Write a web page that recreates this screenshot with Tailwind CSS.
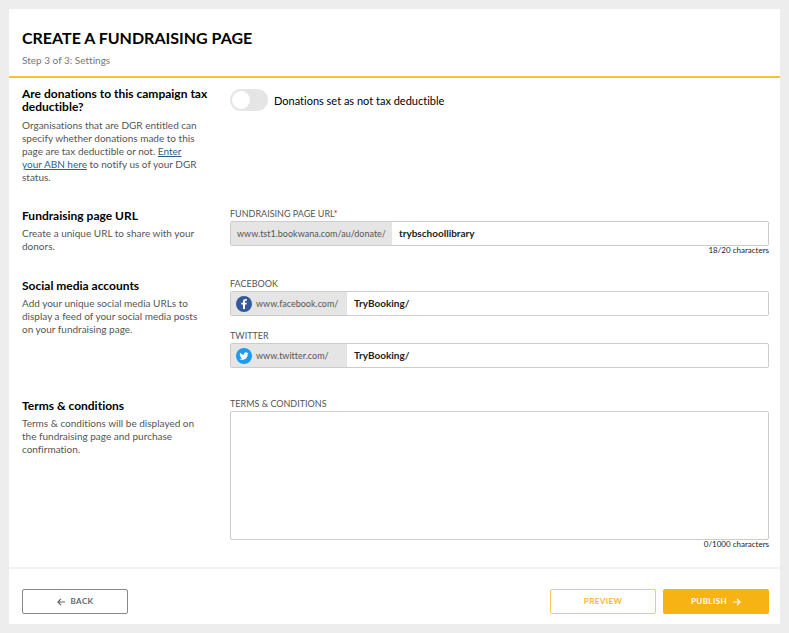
<!DOCTYPE html>
<html lang="en">
<head>
    <meta charset="UTF-8">
    <meta name="viewport" content="width=device-width, initial-scale=1.0">
    <title>Create a fundraising page</title>
    <script src="https://cdn.jsdelivr.net/npm/@tailwindcss/browser@4"></script>
</head>
<body class="bg-[#ededed] p-[9px] font-['Lato','Liberation_Sans',sans-serif] text-[10px] leading-[13px] text-[#555] [font-variant-ligatures:none]">
    <div class="bg-white">
        <header class="border-b-2 border-[#fcc12c] px-[13px] pt-4 pb-[7px]">
            <h1 class="text-[16px] leading-[26px] font-bold text-black">CREATE A FUNDRAISING PAGE</h1>
            <p class="leading-[18px] text-[#777]">Step 3 of 3: Settings</p>
        </header>

        <form>
            <!-- Tax deductible -->
            <section class="grid grid-cols-[188px_1fr] gap-x-5 pl-[13px] pr-[11px] pt-[9px] pb-[25px]">
                <div>
                    <h2 class="text-[12px] font-bold text-black">Are donations to this campaign tax deductible?</h2>
                    <p class="mt-[6px] max-w-[180px]">Organisations that are DGR entitled can specify whether donations made to this page are tax deductible or not. <a href="#" class="text-[#2d5f8f] underline">Enter your ABN here</a> to notify us of your DGR status.</p>
                </div>
                <label class="flex items-center self-start pt-[2px] text-[11px] text-black">
                    <input type="checkbox" class="mr-[6px] h-[22px] w-[38px] appearance-none rounded-full bg-[#e5e5e5] p-[2px] before:block before:size-[18px] before:rounded-full before:bg-white checked:bg-[#f7b314] checked:before:ml-4">
                    Donations set as not tax deductible
                </label>
            </section>

            <!-- Page URL -->
            <section class="grid grid-cols-[188px_1fr] gap-x-5 pl-[13px] pr-[11px] pb-[25px]">
                <div>
                    <h2 class="text-[12px] font-bold text-black">Fundraising page URL</h2>
                    <p class="mt-[5px]">Create a unique URL to share with your donors.</p>
                </div>
                <div>
                    <label for="page_url" class="block text-[9px] leading-[10px]">FUNDRAISING PAGE URL<span class="text-red-600">*</span></label>
                    <div class="mt-[2px] flex h-[25px] rounded-[2px] border border-[#ccc]">
                        <span class="flex items-center bg-[#e5e5e5] px-[6px] text-[9px]">www.tst1.bookwana.com/au/donate/</span>
                        <input type="text" id="page_url" value="trybschoollibrary" class="min-w-0 flex-1 px-[7px] text-[10px] font-bold text-[#222] outline-none">
                    </div>
                    <p class="text-right text-[8px] leading-[8px] text-[#222]">18/20 characters</p>
                </div>
            </section>

            <!-- Social media -->
            <section class="grid grid-cols-[188px_1fr] gap-x-5 pl-[13px] pr-[11px] pb-[31px]">
                <div>
                    <h2 class="text-[12px] font-bold text-black">Social media accounts</h2>
                    <p class="mt-[5px]">Add your unique social media URLs to display a feed of your social media posts on your fundraising page.</p>
                </div>
                <div>
                    <label for="facebook" class="block text-[9px] leading-[10px]">FACEBOOK</label>
                    <div class="mt-[2px] flex h-[25px] rounded-[2px] border border-[#ccc]">
                        <span class="flex w-[116px] items-center gap-1 bg-[#e5e5e5] pl-[5px] text-[9px]">
                            <svg class="size-4" viewBox="0 0 16 16">
                                <circle cx="8" cy="8" r="8" fill="#35589b"/>
                                <path fill="#fff" d="M7 13V8.6H5.3V6.7H7V5.4C7 3.7 8 2.9 9.5 2.9h1.3v1.8H9.9c-.7 0-.9.3-.9.9v1.1h1.8l-.3 1.9H9V13z"/>
                            </svg>
                            www.facebook.com/
                        </span>
                        <input type="text" id="facebook" value="TryBooking/" class="min-w-0 flex-1 px-[7px] text-[10px] font-bold text-[#222] outline-none">
                    </div>
                    <label for="twitter" class="mt-[15px] block text-[9px] leading-[10px]">TWITTER</label>
                    <div class="mt-[2px] flex h-[25px] rounded-[2px] border border-[#ccc]">
                        <span class="flex w-[116px] items-center gap-1 bg-[#e5e5e5] pl-[5px] text-[9px]">
                            <svg class="size-4" viewBox="0 0 16 16">
                                <circle cx="8" cy="8" r="8" fill="#1b9cf0"/>
                                <path fill="#fff" transform="translate(3.4 3.4) scale(.385)" d="M23.9 4.6a10 10 0 0 1-2.8.8 5 5 0 0 0 2.2-2.7 10 10 0 0 1-3.1 1.2 4.9 4.9 0 0 0-8.4 4.5A14 14 0 0 1 1.7 3.2a4.9 4.9 0 0 0 1.5 6.5 5 5 0 0 1-2.2-.6 4.9 4.9 0 0 0 3.9 4.9 5 5 0 0 1-2.2.1 4.9 4.9 0 0 0 4.6 3.4A10 10 0 0 1 0 19.5a14 14 0 0 0 7.5 2.2c9.1 0 14.3-7.7 14-14.6a10 10 0 0 0 2.4-2.5z"/>
                            </svg>
                            www.twitter.com/
                        </span>
                        <input type="text" id="twitter" value="TryBooking/" class="min-w-0 flex-1 px-[7px] text-[10px] font-bold text-[#222] outline-none">
                    </div>
                </div>
            </section>

            <!-- Terms -->
            <section class="grid grid-cols-[188px_1fr] gap-x-5 pl-[13px] pr-[11px] pb-[19px]">
                <div>
                    <h2 class="text-[12px] font-bold text-black">Terms &amp; conditions</h2>
                    <p class="mt-[5px]">Terms &amp; conditions will be displayed on the fundraising page and purchase confirmation.</p>
                </div>
                <div>
                    <label for="terms" class="block text-[9px] leading-[10px]">TERMS &amp; CONDITIONS</label>
                    <textarea id="terms" class="mt-[2px] block h-[129px] w-full resize-none rounded-[2px] border border-[#ccc] p-[7px] text-[10px] font-bold text-[#222] outline-none"></textarea>
                    <p class="text-right text-[8px] leading-[8px] text-[#222]">0/1000 characters</p>
                </div>
            </section>

            <footer class="flex gap-[7px] border-t-2 border-[#f2f2f2] pt-5 pr-[11px] pb-[10px] pl-[13px] text-[8px] font-bold tracking-wider">
                <button type="button" class="mr-auto flex h-[25px] w-[106px] items-center justify-center gap-[6px] rounded-[2px] border border-[#888] text-[#666]">
                    <svg class="size-2" viewBox="0 0 8 8" fill="none" stroke="currentColor" stroke-width="1.2"><path d="M8 4H1M4 .8L.9 4 4 7.2"/></svg>
                    BACK
                </button>
                <button type="button" class="h-[25px] w-[106px] rounded-[2px] border border-[#fbc95a] text-[#f9b53c]">PREVIEW</button>
                <button type="submit" class="flex h-[25px] w-[106px] items-center justify-center gap-[6px] rounded-[2px] bg-[#f7b314] text-white">
                    PUBLISH
                    <svg class="size-2" viewBox="0 0 8 8" fill="none" stroke="currentColor" stroke-width="1.2"><path d="M0 4h7M4 .8L7.1 4 4 7.2"/></svg>
                </button>
            </footer>
        </form>
    </div>
</body>
</html>
